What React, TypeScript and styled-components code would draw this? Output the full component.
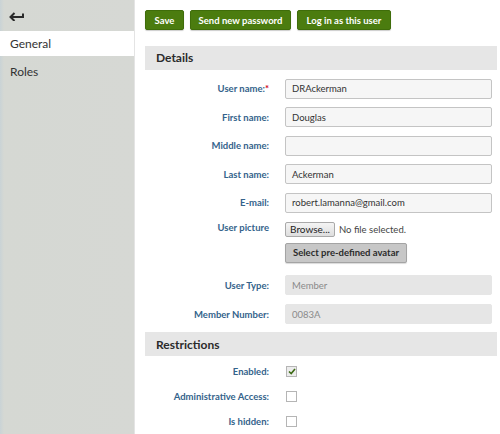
import React from "react";
import styled, { createGlobalStyle } from "styled-components";

const Global = createGlobalStyle`
  html, body { margin: 0; padding: 0; background: #fff; }
  body { font-family: Lato, "Noto Sans", sans-serif; }
  * { box-sizing: border-box; }
`;

const Page = styled.div`
  display: flex;
  width: 500px;
  height: 434px;
  overflow: hidden;
`;

const Sidebar = styled.nav`
  width: 135px;
  flex: none;
  background: linear-gradient(to right, #c9d3d6 0, #d5d8d3 4px, #d6d8d4 100%);
  border-right: 1px solid #e4e4e4;
  display: flex;
  flex-direction: column;
`;

const BackRow = styled.div`
  height: 31px;
  display: flex;
  align-items: center;
  padding-left: 9px;
`;

const NavItem = styled.div<{ $active?: boolean }>`
  height: 25px;
  display: flex;
  align-items: center;
  padding-left: 10px;
  font-size: 12px;
  color: #333;
  background: ${(p) => (p.$active ? "#ffffff" : "transparent")};
  margin-bottom: 3px;
`;

const Main = styled.main`
  flex: 1;
  padding: 10px 3px 0 10px;
  display: flex;
  flex-direction: column;
`;

const Toolbar = styled.div`
  display: flex;
  gap: 6px;
  height: 20px;
  margin-bottom: 16px;
`;

const GreenButton = styled.button<{ $w: number }>`
  width: ${(p) => p.$w}px;
  height: 20px;
  padding: 0;
  border: 1px solid #3f6d0a;
  border-radius: 2px;
  background: #4b7c0f;
  color: #fff;
  font-family: inherit;
  font-size: 9.5px;
  font-weight: 700;
  white-space: nowrap;
  display: flex;
  align-items: center;
  justify-content: center;
  box-shadow: 0 1px 1px rgba(0,0,0,0.2);
`;

const SectionHeader = styled.div`
  height: 26px;
  background: #e6e6e6;
  display: flex;
  align-items: center;
  padding-left: 11px;
  font-size: 12px;
  font-weight: 700;
  color: #2b2b2b;
`;

const Form = styled.div<{ $pad: number }>`
  display: flex;
  flex-direction: column;
  padding-top: ${(p) => p.$pad}px;
`;

const Row = styled.div<{ $h: number; $top?: boolean }>`
  display: grid;
  grid-template-columns: 124px 1fr;
  column-gap: 16px;
  height: ${(p) => p.$h}px;
  align-items: ${(p) => (p.$top ? "start" : "center")};
`;

const Label = styled.label<{ $mt?: number }>`
  text-align: right;
  font-size: 9.5px;
  font-weight: 700;
  color: #34638b;
  white-space: nowrap;
  margin-top: ${(p) => p.$mt ?? 0}px;
`;

const Req = styled.span`
  color: #d0021b;
`;

const Input = styled.div<{ $disabled?: boolean }>`
  width: 207px;
  height: 20px;
  border: 1px solid ${(p) => (p.$disabled ? "#e6e6e6" : "#c4c4c4")};
  background: ${(p) => (p.$disabled ? "#e6e6e6" : "#f6f6f6")};
  border-radius: 2px;
  font-size: 9.5px;
  color: ${(p) => (p.$disabled ? "#8a8a8a" : "#333")};
  display: flex;
  align-items: center;
  padding-left: 6px;
`;

const PictureCol = styled.div`
  display: flex;
  flex-direction: column;
  gap: 6px;
  margin-top: 5px;
`;

const FileLine = styled.div`
  display: flex;
  align-items: center;
  gap: 4px;
  font-size: 9.5px;
  color: #444;
  white-space: nowrap;
`;

const BrowseButton = styled.div`
  width: 50px;
  height: 15px;
  border: 1px solid #a9a9a9;
  border-radius: 2px;
  background: linear-gradient(#f4f4f4, #dedede);
  font-size: 10px;
  color: #222;
  display: flex;
  align-items: center;
  justify-content: center;
`;

const GrayButton = styled.div`
  width: 122px;
  height: 20px;
  border: 1px solid #a4a4a4;
  border-radius: 2px;
  background: #c7c7c7;
  font-size: 9.5px;
  font-weight: 700;
  color: #2b2b2b;
  white-space: nowrap;
  display: flex;
  align-items: center;
  justify-content: center;
  box-shadow: 0 1px 1px rgba(0,0,0,0.15);
`;

const Spacer = styled.div`
  height: 4px;
`;

const Check = styled.div<{ $on?: boolean }>`
  width: 11px;
  height: 11px;
  border: 1px solid #b5b5b5;
  background: ${(p) => (p.$on ? "#ececec" : "#fff")};
  margin-left: 1px;
  display: flex;
  align-items: center;
  justify-content: center;
`;

const BackArrow = () => (
  <svg width="16" height="10" viewBox="0 0 16 10">
    <path d="M1.5 6 H14" stroke="#2a2a2a" strokeWidth="2" fill="none" />
    <path d="M14 2.5 V7" stroke="#2a2a2a" strokeWidth="2" fill="none" />
    <path d="M5.5 2 L1.5 6 L5.5 10" stroke="#2a2a2a" strokeWidth="2" fill="none" />
  </svg>
);

const Tick = () => (
  <svg width="8" height="7" viewBox="0 0 8 7">
    <path d="M1 3.5 L3.2 5.5 L7 1" stroke="#3c6a14" strokeWidth="1.6" fill="none" />
  </svg>
);

export default function App() {
  return (
    <Page>
      <Global />
      <Sidebar>
        <BackRow>
          <BackArrow />
        </BackRow>
        <NavItem $active>General</NavItem>
        <NavItem>Roles</NavItem>
      </Sidebar>
      <Main>
        <Toolbar>
          <GreenButton $w={39}>Save</GreenButton>
          <GreenButton $w={101}>Send new password</GreenButton>
          <GreenButton $w={94}>Log in as this user</GreenButton>
        </Toolbar>
        <SectionHeader>Details</SectionHeader>
        <Form $pad={5}>
          <Row $h={28}>
            <Label>User name:<Req>*</Req></Label>
            <Input>DRAckerman</Input>
          </Row>
          <Row $h={29}>
            <Label>First name:</Label>
            <Input>Douglas</Input>
          </Row>
          <Row $h={28}>
            <Label>Middle name:</Label>
            <Input />
          </Row>
          <Row $h={29}>
            <Label>Last name:</Label>
            <Input>Ackerman</Input>
          </Row>
          <Row $h={28}>
            <Label>E-mail:</Label>
            <Input>robert.lamanna@gmail.com</Input>
          </Row>
          <Row $h={54} $top>
            <Label $mt={5}>User picture</Label>
            <PictureCol>
              <FileLine>
                <BrowseButton>Browse...</BrowseButton>
                <span>No file selected.</span>
              </FileLine>
              <GrayButton>Select pre-defined avatar</GrayButton>
            </PictureCol>
          </Row>
          <Row $h={29}>
            <Label>User Type:</Label>
            <Input $disabled>Member</Input>
          </Row>
          <Row $h={29}>
            <Label>Member Number:</Label>
            <Input $disabled>0083A</Input>
          </Row>
        </Form>
        <Spacer />
        <SectionHeader>Restrictions</SectionHeader>
        <Form $pad={3}>
          <Row $h={25}>
            <Label>Enabled:</Label>
            <Check $on><Tick /></Check>
          </Row>
          <Row $h={25}>
            <Label>Administrative Access:</Label>
            <Check />
          </Row>
          <Row $h={25}>
            <Label>Is hidden:</Label>
            <Check />
          </Row>
        </Form>
      </Main>
    </Page>
  );
}
